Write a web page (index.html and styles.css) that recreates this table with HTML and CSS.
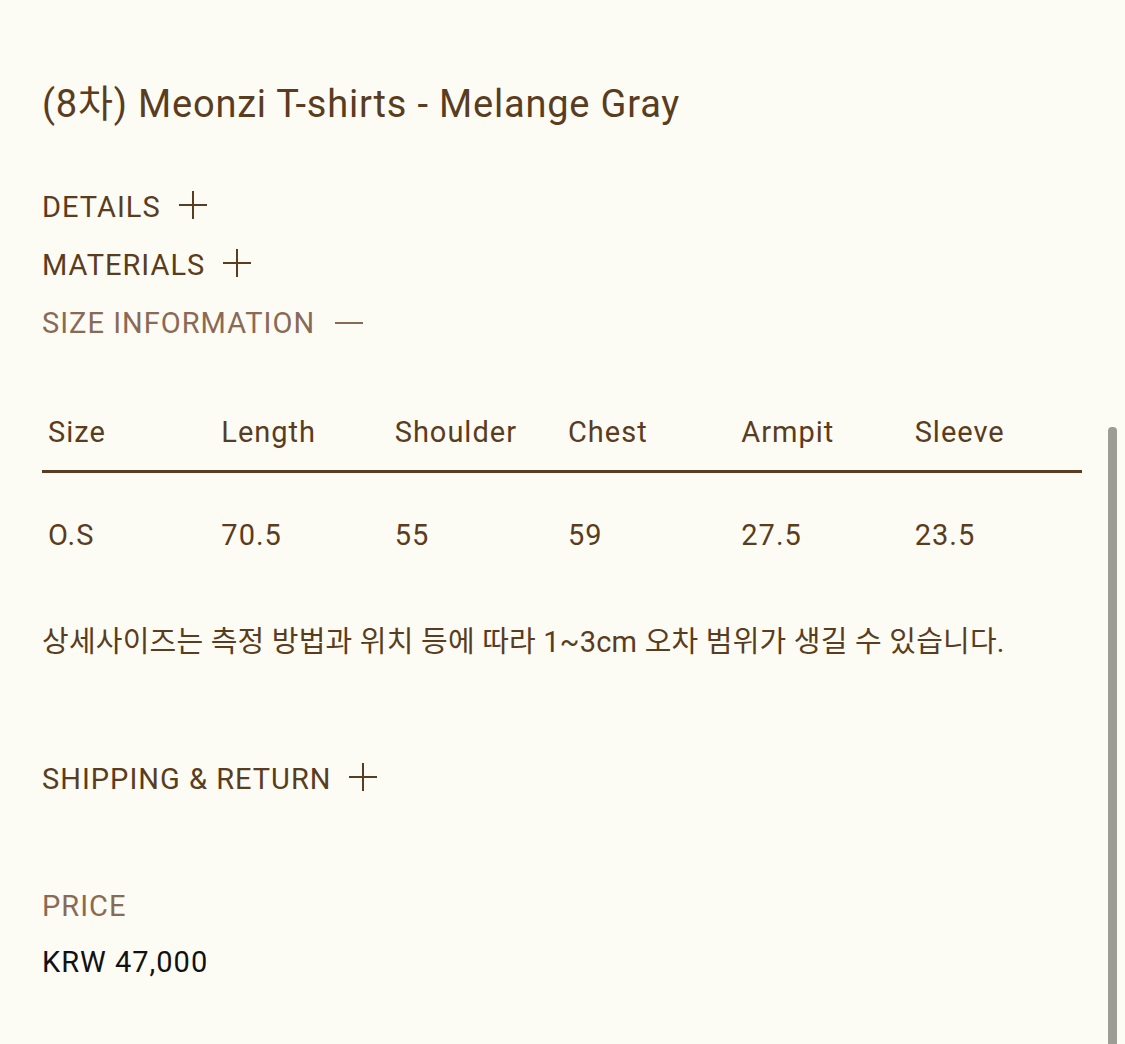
FILE: index.html
```html
<!DOCTYPE html>
<html lang="ko">
<head>
<meta charset="utf-8">
<title>(8차) Meonzi T-shirts - Melange Gray</title>
<link rel="stylesheet" href="styles.css">
</head>
<body>
<main class="product">
  <h1 class="title">(8차) Meonzi T-shirts - Melange Gray</h1>

  <ul class="accordion">
    <li class="acc-item">DETAILS <span class="icon plus"></span></li>
    <li class="acc-item">MATERIALS <span class="icon plus"></span></li>
    <li class="acc-item open">SIZE INFORMATION <span class="icon minus"></span></li>
  </ul>

  <table class="size-table">
    <thead>
      <tr><th>Size</th><th>Length</th><th>Shoulder</th><th>Chest</th><th>Armpit</th><th>Sleeve</th></tr>
    </thead>
    <tbody>
      <tr><td>O.S</td><td>70.5</td><td>55</td><td>59</td><td>27.5</td><td>23.5</td></tr>
    </tbody>
  </table>

  <p class="note">상세사이즈는 측정 방법과 위치 등에 따라 1~3cm 오차 범위가 생길 수 있습니다.</p>

  <div class="acc-item shipping">SHIPPING &amp; RETURN <span class="icon plus"></span></div>

  <div class="price">
    <div class="price-label">PRICE</div>
    <div class="price-value">KRW 47,000</div>
  </div>
</main>
<div class="scrollbar"></div>
</body>
</html>
```

FILE: styles.css
```css
html, body {
  margin: 0;
  padding: 0;
  background: #fdfcf4;
}
body {
  font-family: Roboto, "Noto Sans CJK KR", sans-serif;
  color: #5a3c20;
  height: 1044px;
  overflow: hidden;
}
.product {
  padding: 79px 43px 0 42px;
}
.title {
  margin: 0;
  font-size: 38px;
  letter-spacing: 0.8px;
  font-weight: 400;
  line-height: 50px;
  height: 50px;
}
.accordion {
  list-style: none;
  margin: 49px 0 0;
  padding: 0;
}
.acc-item {
  font-size: 29px;
  letter-spacing: 1px;
  line-height: 58px;
  height: 58px;
  display: flex;
  align-items: center;
  gap: 18px;
}
.acc-item.open {
  color: #8a6a55;
  gap: 20px;
}
.icon {
  position: relative;
  width: 28px;
  height: 28px;
  display: inline-block;
  margin-top: -5px;
}
.icon::before,
.icon::after {
  content: "";
  position: absolute;
  background: #5a3c20;
}
.icon::before {
  left: 0;
  right: 0;
  top: 13px;
  height: 2px;
}
.plus::after {
  top: 0;
  bottom: 0;
  left: 13px;
  width: 2px;
}
.minus::before {
  background: #8a6a55;
  top: 15px;
}
.size-table {
  width: 1040px;
  border-collapse: collapse;
  margin-top: 40px;
  table-layout: fixed;
}
.size-table th,
.size-table td {
  text-align: left;
  font-weight: 400;
  font-size: 29px;
  letter-spacing: 1px;
  line-height: 40px;
  padding: 0 0 0 6px;
}
.size-table th {
  padding-top: 20px;
  padding-bottom: 18px;
  border-bottom: 3px solid #5a3c20;
}
.size-table td {
  padding-top: 42px;
}
.note {
  margin: 67px 0 0;
  font-size: 29px;
  letter-spacing: 0.2px;
  line-height: 40px;
}
.shipping {
  margin-top: 88px;
}
.price {
  margin-top: 78px;
}
.price-label {
  color: #8a6a55;
  font-size: 29px;
  letter-spacing: 1px;
  line-height: 40px;
}
.price-value {
  color: #111;
  font-size: 29px;
  letter-spacing: 1px;
  line-height: 40px;
  margin-top: 16px;
}
.scrollbar {
  position: absolute;
  left: 1108px;
  top: 427px;
  width: 9px;
  height: 640px;
  background: #9d9d97;
  border-radius: 4px 4px 0 0;
}
```
